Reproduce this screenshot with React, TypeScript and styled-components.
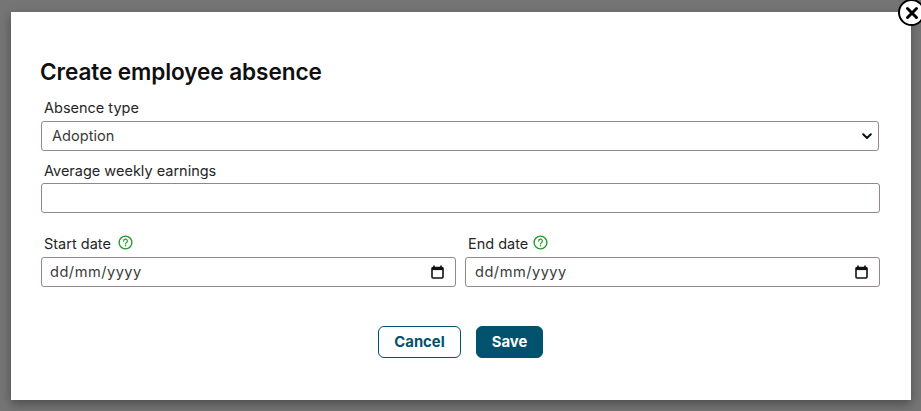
import React from "react";
import styled, { createGlobalStyle } from "styled-components";

const GlobalStyle = createGlobalStyle`
  html, body {
    margin: 0;
    padding: 0;
    height: 100%;
    overflow: hidden;
    font-family: "Inter", "Liberation Sans", sans-serif;
  }
`;

const Backdrop = styled.div`
  width: 921px;
  height: 411px;
  padding: 12px 10px 11px 11px;
  box-sizing: border-box;
  background: #757575;
`;

const Modal = styled.div`
  position: relative;
  width: 900px;
  height: 388px;
  box-sizing: border-box;
  padding: 47px 31px 0 30px;
  background: #fff;
  box-shadow: 0 4px 10px rgba(0, 0, 0, 0.35);
`;

const CloseButton = styled.button`
  position: absolute;
  top: -13px;
  right: -14px;
  width: 27px;
  height: 27px;
  padding: 0;
  box-sizing: border-box;
  display: flex;
  align-items: center;
  justify-content: center;
  background: #fff;
  border: 2.5px solid #000;
  border-radius: 50%;
`;

const Title = styled.h2`
  margin: 0 0 13px -1px;
  height: 26px;
  font-size: 22.6px;
  line-height: 26px;
  font-weight: 600;
  letter-spacing: -0.1px;
  color: #101010;
`;

const Group = styled.div<{ $gap?: number }>`
  display: flex;
  flex-direction: column;
  margin-bottom: ${(p) => p.$gap ?? 0}px;
`;

const Label = styled.label<{ $below?: number; $iconGap?: number }>`
  display: flex;
  align-items: center;
  gap: ${(p) => p.$iconGap ?? 5}px;
  height: 20px;
  margin: 0 0 ${(p) => p.$below ?? 3}px 3px;
  font-size: 14.5px;
  line-height: 20px;
  color: #262626;
`;

const Field = styled.div<{ $inset?: number; $end?: number; $trim?: number }>`
  display: flex;
  align-items: center;
  justify-content: space-between;
  height: 30px;
  box-sizing: border-box;
  margin-right: ${(p) => p.$trim ?? 0}px;
  padding: 0 ${(p) => p.$end ?? 11}px 0 ${(p) => p.$inset ?? 10}px;
  border: 1px solid #94848b;
  border-radius: 3px;
  background: #fff;
  font-size: 14.6px;
  color: #3a3a3a;
`;

const DateText = styled.span`
  letter-spacing: 0.5px;
`;

const DateRow = styled.div`
  display: grid;
  grid-template-columns: 415px 415px;
  column-gap: 9px;
`;

const Actions = styled.div`
  display: flex;
  justify-content: center;
  gap: 15px;
  margin-top: 39px;
`;

const Button = styled.button<{ $primary?: boolean }>`
  height: 32px;
  width: ${(p) => (p.$primary ? 67 : 83)}px;
  padding: 0;
  border-radius: 6px;
  border: 1px solid #02516d;
  background: ${(p) => (p.$primary ? "#02516d" : "#fff")};
  color: ${(p) => (p.$primary ? "#fff" : "#02516d")};
  font-family: inherit;
  font-size: 14.8px;
  font-weight: 700;
`;

const HelpWrap = styled.span`
  display: flex;
  margin-top: -3px;
`;

const CloseIcon = () => (
  <svg width="14" height="14" viewBox="0 0 14 14">
    <path d="M2.5 2.5 11.5 11.5M11.5 2.5 2.5 11.5" stroke="#000" strokeWidth="3" strokeLinecap="round" />
  </svg>
);

const Chevron = () => (
  <svg width="10" height="7" viewBox="0 0 10 7">
    <path d="M1.2 1.2 5 5l3.8-3.8" fill="none" stroke="#111" strokeWidth="2" strokeLinecap="round" strokeLinejoin="round" />
  </svg>
);

const CalendarIcon = () => (
  <svg width="13" height="14" viewBox="0 0 13 14">
    <path d="M3 .5v2M10 .5v2" stroke="#111" strokeWidth="1.6" />
    <rect x="1" y="2.5" width="11" height="10.5" rx="1" fill="none" stroke="#111" strokeWidth="1.6" />
    <rect x="1" y="2.5" width="11" height="2.6" fill="#111" />
  </svg>
);

const HelpIcon = () => (
  <HelpWrap>
    <svg width="15" height="15" viewBox="0 0 15 15">
      <circle cx="7.5" cy="7.5" r="6.4" fill="none" stroke="#1e9e2a" strokeWidth="1.4" />
      <path d="M5.6 6a1.9 1.9 0 1 1 2.8 1.7c-.6.3-.9.7-.9 1.3" fill="none" stroke="#1e9e2a" strokeWidth="1.2" strokeLinecap="round" />
      <circle cx="7.5" cy="10.8" r=".8" fill="#1e9e2a" />
    </svg>
  </HelpWrap>
);

export default function App() {
  return (
    <>
      <GlobalStyle />
      <Backdrop>
        <Modal>
          <CloseButton aria-label="Close">
            <CloseIcon />
          </CloseButton>
          <Title>Create employee absence</Title>
          <Group $gap={10}>
            <Label>Absence type</Label>
            <Field $trim={1} $end={6}>
              Adoption
              <Chevron />
            </Field>
          </Group>
          <Group $gap={21}>
            <Label $below={2}>Average weekly earnings</Label>
            <Field />
          </Group>
          <DateRow>
            <Group>
              <Label $iconGap={7}>
                Start date <HelpIcon />
              </Label>
              <Field $inset={8}>
                <DateText>dd/mm/yyyy</DateText>
                <CalendarIcon />
              </Field>
            </Group>
            <Group>
              <Label>
                End date <HelpIcon />
              </Label>
              <Field $inset={9}>
                <DateText>dd/mm/yyyy</DateText>
                <CalendarIcon />
              </Field>
            </Group>
          </DateRow>
          <Actions>
            <Button>Cancel</Button>
            <Button $primary>Save</Button>
          </Actions>
        </Modal>
      </Backdrop>
    </>
  );
}
